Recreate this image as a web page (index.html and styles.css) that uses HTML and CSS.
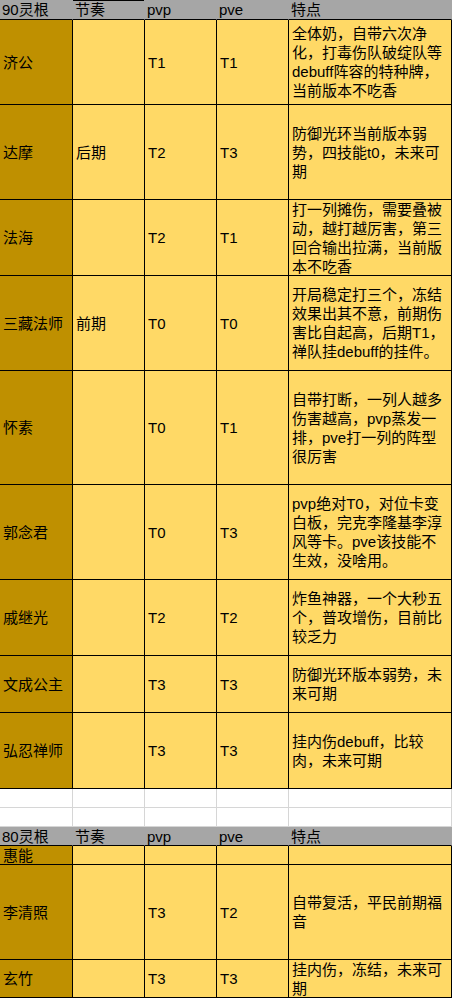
FILE: index.html
```html
<!DOCTYPE html>
<html lang="zh-CN">
<head>
<meta charset="utf-8">
<title>灵根</title>
<link rel="stylesheet" href="styles.css">
</head>
<body>
<div class="sheet">
  <div class="row head h-20">
    <div class="cell">90灵根</div>
    <div class="cell marked">节奏</div>
    <div class="cell">pvp</div>
    <div class="cell">pve</div>
    <div class="cell">特点</div>
  </div>
  <div class="row h-85">
    <div class="cell name">济公</div>
    <div class="cell"></div>
    <div class="cell">T1</div>
    <div class="cell">T1</div>
    <div class="cell">全体奶，自带六次净化，打毒伤队破绽队等debuff阵容的特种牌，当前版本不吃香</div>
  </div>
  <div class="row h-95">
    <div class="cell name">达摩</div>
    <div class="cell">后期</div>
    <div class="cell">T2</div>
    <div class="cell">T3</div>
    <div class="cell">防御光环当前版本弱势，四技能t0，未来可期</div>
  </div>
  <div class="row h-76">
    <div class="cell name">法海</div>
    <div class="cell"></div>
    <div class="cell">T2</div>
    <div class="cell">T1</div>
    <div class="cell">打一列摊伤，需要叠被动，越打越厉害，第三回合输出拉满，当前版本不吃香</div>
  </div>
  <div class="row h-95">
    <div class="cell name">三藏法师</div>
    <div class="cell">前期</div>
    <div class="cell">T0</div>
    <div class="cell">T0</div>
    <div class="cell">开局稳定打三个，冻结效果出其不意，前期伤害比自起高，后期T1，禅队挂debuff的挂件。</div>
  </div>
  <div class="row h-114">
    <div class="cell name">怀素</div>
    <div class="cell"></div>
    <div class="cell">T0</div>
    <div class="cell">T1</div>
    <div class="cell">自带打断，一列人越多伤害越高，pvp蒸发一排，pve打一列的阵型很厉害</div>
  </div>
  <div class="row h-95">
    <div class="cell name">郭念君</div>
    <div class="cell"></div>
    <div class="cell">T0</div>
    <div class="cell">T3</div>
    <div class="cell">pvp绝对T0，对位卡变白板，完克李隆基李淳风等卡。pve该技能不生效，没啥用。</div>
  </div>
  <div class="row h-76">
    <div class="cell name">戚继光</div>
    <div class="cell"></div>
    <div class="cell">T2</div>
    <div class="cell">T2</div>
    <div class="cell">炸鱼神器，一个大秒五个，普攻增伤，目前比较乏力</div>
  </div>
  <div class="row h-57">
    <div class="cell name">文成公主</div>
    <div class="cell"></div>
    <div class="cell">T3</div>
    <div class="cell">T3</div>
    <div class="cell">防御光环版本弱势，未来可期</div>
  </div>
  <div class="row h-76">
    <div class="cell name">弘忍禅师</div>
    <div class="cell"></div>
    <div class="cell">T3</div>
    <div class="cell">T3</div>
    <div class="cell">挂内伤debuff，比较肉，未来可期</div>
  </div>
  <div class="row blank h-19">
    <div class="cell"></div><div class="cell"></div><div class="cell"></div><div class="cell"></div><div class="cell"></div>
  </div>
  <div class="row blank h-19">
    <div class="cell"></div><div class="cell"></div><div class="cell"></div><div class="cell"></div><div class="cell"></div>
  </div>
  <div class="row head h-19">
    <div class="cell">80灵根</div>
    <div class="cell">节奏</div>
    <div class="cell">pvp</div>
    <div class="cell">pve</div>
    <div class="cell">特点</div>
  </div>
  <div class="row h-19">
    <div class="cell name">惠能</div>
    <div class="cell"></div>
    <div class="cell"></div>
    <div class="cell"></div>
    <div class="cell"></div>
  </div>
  <div class="row h-95">
    <div class="cell name">李清照</div>
    <div class="cell"></div>
    <div class="cell">T3</div>
    <div class="cell">T2</div>
    <div class="cell">自带复活，平民前期福音</div>
  </div>
  <div class="row h-38">
    <div class="cell name">玄竹</div>
    <div class="cell"></div>
    <div class="cell">T3</div>
    <div class="cell">T3</div>
    <div class="cell">挂内伤，冻结，未来可期</div>
  </div>
</div>
</body>
</html>
```
FILE: styles.css
```css
html, body {
  margin: 0;
  padding: 0;
  background: #ffffff;
}

.sheet {
  display: flex;
  flex-direction: column;
  width: 452px;
  font-family: "Liberation Sans", "Noto Sans CJK SC", sans-serif;
  font-size: 15px;
  line-height: 19px;
  color: #000;
  text-spacing-trim: space-all;
}

.row {
  display: grid;
  grid-template-columns: 73px 72px 72px 72px 163px;
}

.cell {
  box-sizing: border-box;
  display: flex;
  align-items: center;
  padding: 0 3px;
  overflow: hidden;
  background: #ffd966;
  border-right: 1px solid #000;
  border-bottom: 1px solid #000;
}

.cell.name {
  background: #bf9000;
}

.head .cell {
  background: #a6a6a6;
  border-right-color: #a6a6a6;
  padding-left: 2px;
}

.head .cell.marked {
  box-shadow: inset 0 1px 0 #000;
}

.blank .cell {
  background: #ffffff;
  border-right-color: #d6d6d6;
  border-bottom-color: #d6d6d6;
}

.h-19 { height: 19px; }
.h-20 { height: 20px; }
.h-38 { height: 38px; }
.h-57 { height: 57px; }
.h-76 { height: 76px; }
.h-85 { height: 85px; }
.h-95 { height: 95px; }
.h-114 { height: 114px; }
```
